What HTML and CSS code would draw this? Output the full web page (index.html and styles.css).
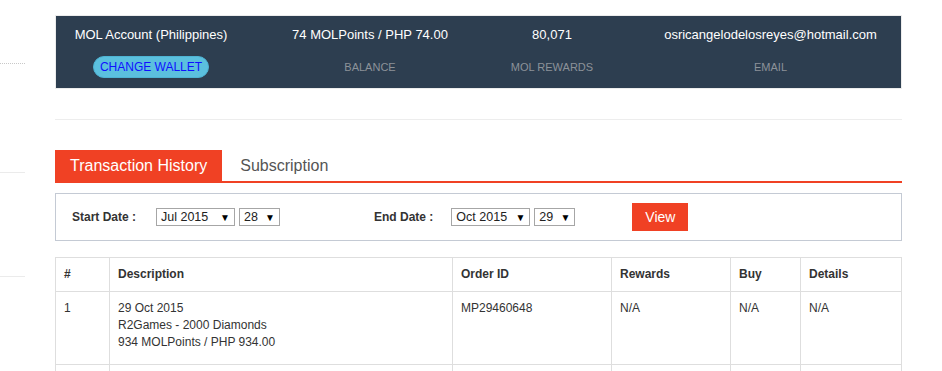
FILE: index.html
```html
<!DOCTYPE html>
<html>
<head>
<meta charset="utf-8">
<link rel="stylesheet" href="styles.css">
</head>
<body>

<div class="page">
  <!-- 左側選單 (只露出一小截) -->
  <div class="sideMenu">
    <div class="sideItem sideItem1"></div>
    <div class="sideItem sideItem2"></div>
    <div class="sideItem sideItem3"></div>
  </div>

  <div class="mainArea">
    <!-- 帳戶資訊 -->
    <div class="walletPanel">
      <div class="walletCol col1">
        <div class="walletValue">MOL Account (Philippines)</div>
        <a class="btnWallet" href="#">CHANGE WALLET</a>
      </div>
      <div class="walletCol col2">
        <div class="walletValue">74 MOLPoints / PHP 74.00</div>
        <div class="walletLabel">BALANCE</div>
      </div>
      <div class="walletCol col3">
        <div class="walletValue">80,071</div>
        <div class="walletLabel">MOL REWARDS</div>
      </div>
      <div class="walletCol col4">
        <div class="walletValue">osricangelodelosreyes@hotmail.com</div>
        <div class="walletLabel">EMAIL</div>
      </div>
    </div>

    <hr class="divider">

    <!-- 分頁 -->
    <ul class="tabs">
      <li class="tab active">Transaction History</li>
      <li class="tab">Subscription</li>
    </ul>

    <!-- 日期篩選 -->
    <div class="filterBox">
      <div class="filterGroup">
        <span class="filterLabel">Start Date :</span>
        <span class="fakeSelect selMonth"><span>Jul 2015</span><span class="arrow">▼</span></span>
        <span class="fakeSelect selDay"><span>28</span><span class="arrow">▼</span></span>
      </div>
      <div class="filterGroup">
        <span class="filterLabel">End Date :</span>
        <span class="fakeSelect selMonth"><span>Oct 2015</span><span class="arrow">▼</span></span>
        <span class="fakeSelect selDay"><span>29</span><span class="arrow">▼</span></span>
      </div>
      <button class="btnView">View</button>
    </div>

    <!-- 交易紀錄 -->
    <table class="historyTable">
      <colgroup>
        <col style="width:54px">
        <col style="width:343px">
        <col style="width:159px">
        <col style="width:119px">
        <col style="width:70px">
        <col>
      </colgroup>
      <thead>
        <tr>
          <th>#</th>
          <th>Description</th>
          <th>Order ID</th>
          <th>Rewards</th>
          <th>Buy</th>
          <th>Details</th>
        </tr>
      </thead>
      <tbody>
        <tr class="rowItem">
          <td>1</td>
          <td>29 Oct 2015<br>R2Games - 2000 Diamonds<br>934 MOLPoints / PHP 934.00</td>
          <td>MP29460648</td>
          <td>N/A</td>
          <td>N/A</td>
          <td>N/A</td>
        </tr>
        <tr class="rowItem">
          <td></td>
          <td></td>
          <td></td>
          <td></td>
          <td></td>
          <td></td>
        </tr>
      </tbody>
    </table>
  </div>
</div>

</body>
</html>
```

FILE: styles.css
```css
/* 整體版面 */
body {
  margin: 0;
  font-family: "Liberation Sans", Arial, sans-serif;
  color: #333;
  background-color: #fff;
}

.page {
  display: flex;
  gap: 30px;
  padding-top: 15px;
}

/* 左側選單 */
.sideMenu {
  width: 25px;
  flex-shrink: 0;
  margin-top: -15px;
}
.sideItem1 {
  height: 63px;
  border-bottom: 1px dotted #c8c8c8;
}
.sideItem2 {
  height: 108px;
  border-bottom: 1px solid #ebebeb;
}
.sideItem3 {
  height: 103px;
  border-bottom: 1px solid #ebebeb;
}

.mainArea {
  width: 847px;
}

/* 帳戶資訊 */
.walletPanel {
  display: grid;
  grid-template-columns: 192px 244px 120px 1fr;
  background-color: #2d3e50;
  border: 1px solid #ececec;
  padding: 10px 0 10px 0;
  font-size: 13px;
}
.walletCol {
  display: flex;
  flex-direction: column;
  align-items: center;
}
.col1 {
  padding-right: 2px;
}
.col4 {
  padding-left: 28px;
}
.walletValue {
  color: #fff;
  line-height: 18px;
  height: 18px;
  white-space: nowrap;
}
.walletLabel {
  margin-top: 12px;
  height: 22px;
  line-height: 22px;
  color: #8c9299;
  font-size: 11px;
}
.btnWallet {
  margin-top: 12px;
  height: 20px;
  line-height: 20px;
  padding: 0 6px;
  background-color: #5bc0de;
  border: 1px solid #4eb3d3;
  border-radius: 11px;
  color: #1010ff;
  font-size: 12px;
  text-decoration: none;
}

.divider {
  border: 0;
  border-top: 1px solid #ededed;
  margin: 30px 0 0 0;
}

/* 分頁 */
.tabs {
  display: flex;
  list-style: none;
  margin: 30px 0 0 0;
  padding: 0;
  border-bottom: 2px solid #f04124;
}
.tab {
  height: 31px;
  line-height: 31px;
  padding: 0 15px;
  font-size: 16px;
  color: #555;
}
.tab.active {
  background-color: #f04124;
  color: #fff;
  margin-right: 3px;
}

/* 日期篩選 */
.filterBox {
  display: flex;
  align-items: center;
  height: 46px;
  margin-top: 10px;
  padding-left: 16px;
  border: 1px solid #c4cad4;
  font-size: 12px;
}
.filterGroup {
  display: flex;
  align-items: center;
  gap: 4px;
  margin-right: 94px;
}
.filterGroup + .filterGroup {
  margin-right: 57px;
}
.filterLabel {
  font-weight: bold;
  margin-right: 16px;
  color: #333;
}
.filterGroup + .filterGroup .filterLabel {
  margin-right: 14px;
}
.fakeSelect {
  display: flex;
  justify-content: space-between;
  align-items: center;
  box-sizing: border-box;
  height: 18px;
  padding: 0 4px 0 4px;
  border: 1px solid #a6a6a6;
  color: #222;
  font-size: 12.5px;
  background-color: #fff;
}
.selMonth {
  width: 79px;
}
.selDay {
  width: 41px;
}
.arrow {
  font-size: 10px;
  color: #000;
}
.btnView {
  height: 28px;
  padding: 0 13px;
  border: 0;
  background-color: #f04124;
  color: #fff;
  font-family: "Liberation Sans", Arial, sans-serif;
  font-size: 14px;
}

/* 交易紀錄表格 */
.historyTable {
  width: 847px;
  margin-top: 16px;
  border-collapse: collapse;
  table-layout: fixed;
  font-size: 12px;
}
.historyTable th,
.historyTable td {
  border: 1px solid #dedede;
  padding: 8px 8px 8px 8px;
  line-height: 17px;
  text-align: left;
  vertical-align: top;
}
.historyTable th {
  font-weight: bold;
  color: #333;
}
.rowItem td {
  height: 56px;
}
```
